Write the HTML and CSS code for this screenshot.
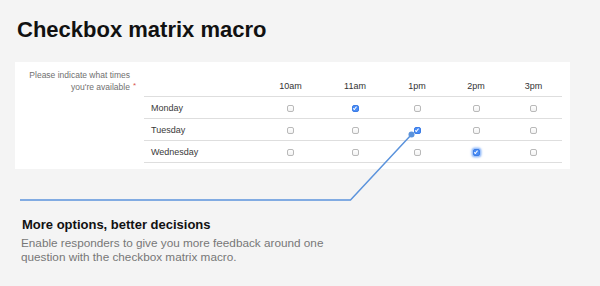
FILE: index.html
```html
<!DOCTYPE html>
<html lang="en">
<head>
  <meta charset="UTF-8">
  <title>Checkbox matrix macro</title>
  <link rel="stylesheet" href="styles.css">
</head>
<body>

  <h1>Checkbox matrix macro</h1>

  <div class="panel">
    <div class="question">
      Please indicate what times<br>you're available<span class="req">*</span>
    </div>

    <div class="matrix">
      <div class="row head">
        <span></span>
        <span>10am</span>
        <span>11am</span>
        <span>1pm</span>
        <span>2pm</span>
        <span>3pm</span>
      </div>
      <div class="row">
        <span class="day">Monday</span>
        <span><i class="cb"></i></span>
        <span><i class="cb on"></i></span>
        <span><i class="cb"></i></span>
        <span><i class="cb"></i></span>
        <span><i class="cb"></i></span>
      </div>
      <div class="row">
        <span class="day">Tuesday</span>
        <span><i class="cb"></i></span>
        <span><i class="cb"></i></span>
        <span><i class="cb on"></i></span>
        <span><i class="cb"></i></span>
        <span><i class="cb"></i></span>
      </div>
      <div class="row">
        <span class="day">Wednesday</span>
        <span><i class="cb"></i></span>
        <span><i class="cb"></i></span>
        <span><i class="cb"></i></span>
        <span><i class="cb on focus"></i></span>
        <span><i class="cb"></i></span>
      </div>
    </div>
  </div>

  <!-- callout line pointing at the checked box -->
  <svg class="pointer" width="600" height="286" viewBox="0 0 600 286">
    <path d="M20 200 L350.5 200 L411.5 134.5" fill="none" stroke="#5b93dc" stroke-width="1.5"/>
    <circle cx="411.5" cy="134.5" r="3" fill="#5b93dc"/>
  </svg>

  <div class="feature">
    <h2>More options, better decisions</h2>
    <p>Enable responders to give you more feedback around one<br>question with the checkbox matrix macro.</p>
  </div>

</body>
</html>
```

FILE: styles.css
```css
body {
  font-family: 'Liberation Sans', Arial, sans-serif;
  margin: 0;
  background: #f4f4f4;
  color: #111;
  width: 600px;
  height: 286px;
  position: relative;
  overflow: hidden;
}

h1 {
  font-size: 22px;
  line-height: 26px;
  margin: 17px 0 0 17px;
  font-weight: bold;
}

.panel {
  display: flex;
  width: 547px;
  margin: 19px 0 0 15px;
  padding: 7px 8px 6px 0;
  background: #fff;
}

.question {
  width: 115px;
  padding-right: 7px;
  text-align: right;
  font-size: 8.5px;
  line-height: 12px;
  color: #707070;
}

.req {
  position: relative;
  top: -2px;
  margin-left: 3px;
  margin-right: -6px;
  color: #d9534f;
  font-size: 8px;
}

.matrix {
  width: 418px;
  margin-left: 7px;
}

.row {
  display: grid;
  grid-template-columns: 114px 65px 64px 60px 58px 57px;
  height: 21px;
  border-bottom: 1px solid #dedede;
  align-items: center;
  font-size: 9px;
  color: #3a3a3a;
}

.row span {
  text-align: center;
}

.row .day {
  text-align: left;
  padding-left: 7px;
}

.row.head {
  height: 15px;
  padding-top: 12px;
  align-items: start;
  color: #333;
  border-bottom-width: 1.5px;
}

.cb {
  display: inline-block;
  position: relative;
  width: 5px;
  height: 5px;
  border: 1px solid #b9b9b9;
  border-radius: 2px;
  background: linear-gradient(#fff, #f2f2f2);
  vertical-align: middle;
}

.cb.on {
  background: #4a8cf5;
  border-color: #3c7de6;
}

.cb.on::after {
  content: "";
  position: absolute;
  left: 1.5px;
  top: 0;
  width: 1.2px;
  height: 2.6px;
  border-right: 1px solid #fff;
  border-bottom: 1px solid #fff;
  transform: rotate(40deg);
}

.cb.focus {
  box-shadow: 0 0 2px 1.5px rgba(74, 140, 245, 0.6);
}

.pointer {
  position: absolute;
  left: 0;
  top: 0;
  pointer-events: none;
}

.feature {
  margin-top: 48px;
  padding-left: 21px;
}

.feature h2 {
  font-size: 13px;
  line-height: 16px;
  margin: 0 0 3px 1px;
  color: #111;
}

.feature p {
  font-size: 11.75px;
  line-height: 14px;
  margin: 0;
  color: #777;
}
```
